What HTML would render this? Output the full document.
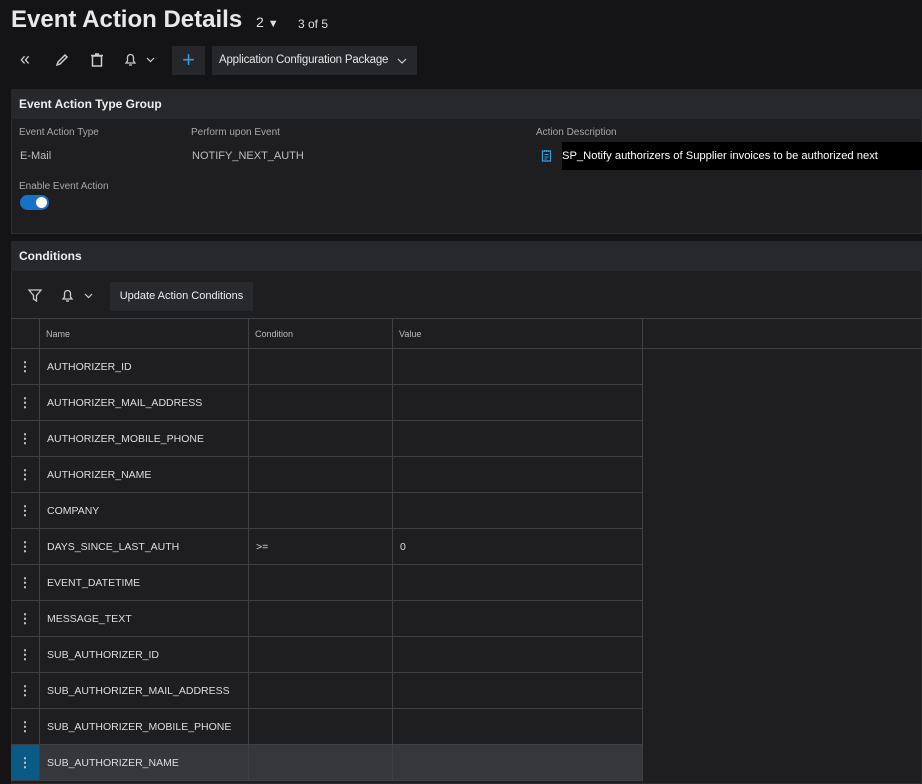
<!DOCTYPE html>
<html><head><style>
*{box-sizing:border-box;margin:0;padding:0}
body{width:922px;height:784px;background:#141416;font-family:"Liberation Sans",sans-serif;color:#e6e6e6;position:relative;overflow:hidden}
.a{position:absolute}
.title{left:11px;top:6px;font-size:24px;font-weight:bold;color:#e8e8e8}
.lbl{font-size:10px;color:#a8a8a8}
.val{font-size:11px;color:#bdbdbd}
.row{position:absolute;left:11px;width:632px;height:36px;border-bottom:1px solid #3f4043}
.row .k{position:absolute;left:0;top:0;width:29px;height:35px;border-right:1px solid #3f4043;text-align:center;line-height:35px;font-weight:bold;font-size:13px;color:#ccc}
.row .n{position:absolute;left:36px;top:12px;font-size:10.5px;color:#dedede}
.row .c1{position:absolute;left:237px;top:0;width:1px;height:35px;background:#3f4043}
.row .c2{position:absolute;left:381px;top:0;width:1px;height:35px;background:#3f4043}
.row .c3{position:absolute;left:631px;top:0;width:1px;height:35px;background:#3f4043}
</style></head><body>
<div class="a title">Event Action Details</div>
<div class="a" style="left:256px;top:14px;font-size:14px;color:#ddd">2 <span style="font-size:11px">&#9660;</span></div>
<div class="a" style="left:298px;top:17px;font-size:12px;color:#ddd">3 of 5</div>
<div class="a" style="left:20px;top:50px;font-size:18px;color:#ccc;line-height:18px">&laquo;</div>
<svg class="a" style="left:55px;top:53px" width="14" height="14"><path d="M2 12 L3 9 L10 2 L12 4 L5 11 Z" fill="none" stroke="#ccc" stroke-width="1.5"/></svg>
<svg class="a" style="left:90px;top:52px" width="14" height="15"><rect x="2.5" y="4" width="9" height="10" fill="none" stroke="#ccc" stroke-width="1.5"/><path d="M1 3.5H13M5 2H9" stroke="#ccc" stroke-width="1.5"/></svg>
<svg class="a" style="left:123px;top:52px" width="32" height="15"><path d="M3 11 L4.5 9 V5.5 A3 3 0 0 1 10.5 5.5 V9 L12 11 Z" fill="none" stroke="#ccc" stroke-width="1.3"/><path d="M6 13H9" stroke="#ccc" stroke-width="1.3"/><path d="M24 6 L27.5 9.5 L31 6" fill="none" stroke="#ccc" stroke-width="1.2"/></svg>
<div class="a" style="left:172px;top:46px;width:33px;height:29px;background:#25272a;color:#3a9ad9;font-size:22px;text-align:center;line-height:27px">+</div>
<div class="a" style="left:212px;top:46px;width:205px;height:29px;background:#25272a;font-size:11.5px;letter-spacing:-0.2px;color:#e6e6e6;line-height:29px;padding-left:7px">Application Configuration Package</div>
<svg class="a" style="left:396px;top:56px" width="12" height="10"><path d="M2 3 L6 7 L10 3" fill="none" stroke="#ccc" stroke-width="1.2"/></svg>
<div class="a" style="left:11px;top:89px;width:911px;height:145px;background:#1e1e21;border:1px solid #2c2d30"></div>
<div class="a" style="left:11px;top:89px;width:911px;height:30px;background:#27282b;font-size:12px;font-weight:bold;padding:8px 0 0 8px;color:#eee">Event Action Type Group</div>
<div class="a lbl" style="left:19px;top:127px">Event Action Type</div>
<div class="a lbl" style="left:191px;top:127px">Perform upon Event</div>
<div class="a lbl" style="left:536px;top:127px">Action Description</div>
<div class="a val" style="left:20px;top:150px">E-Mail</div>
<div class="a val" style="left:192px;top:150px">NOTIFY_NEXT_AUTH</div>
<svg class="a" style="left:541px;top:149px" width="12" height="14"><rect x="1.5" y="2" width="8" height="10" fill="none" stroke="#3a9ad9" stroke-width="1.3"/><path d="M3.5 5.5H7.5M3.5 8H7.5M3.5 10H6M3.5 1V3M5.5 1V3M7.5 1V3" stroke="#3a9ad9" stroke-width="1"/></svg>
<div class="a" style="left:562px;top:142px;width:360px;height:28px;background:#000;font-size:11.2px;color:#fff;line-height:28px">SP_Notify authorizers of Supplier invoices to be authorized next</div>
<div class="a lbl" style="left:19px;top:181px">Enable Event Action</div>
<div class="a" style="left:20px;top:195px;width:29px;height:15px;background:#1671c9;border-radius:8px"><div style="position:absolute;right:2px;top:2px;width:11px;height:11px;background:#fff;border-radius:50%"></div></div>
<div class="a" style="left:11px;top:241px;width:911px;height:543px;background:#1e1e21;border:1px solid #2c2d30"></div>
<div class="a" style="left:11px;top:241px;width:911px;height:30px;background:#27282b;font-size:12px;font-weight:bold;padding:8px 0 0 8px;color:#eee">Conditions</div>
<svg class="a" style="left:27px;top:288px" width="16" height="15"><path d="M2 2H14L9.5 7.5V13L6.5 11V7.5Z" fill="none" stroke="#ccc" stroke-width="1.3"/></svg>
<svg class="a" style="left:60px;top:288px" width="36" height="15"><path d="M3 11 L4.5 9 V5.5 A3 3 0 0 1 10.5 5.5 V9 L12 11 Z" fill="none" stroke="#ccc" stroke-width="1.3"/><path d="M6 13H9" stroke="#ccc" stroke-width="1.3"/><path d="M25 6 L28.5 9.5 L32 6" fill="none" stroke="#ccc" stroke-width="1.2"/></svg>
<div class="a" style="left:110px;top:282px;width:143px;height:29px;background:#27292c;font-size:11px;color:#eee;line-height:29px;text-align:center">Update Action Conditions</div>
<div class="a" style="left:11px;top:318px;width:911px;height:31px;border-top:1px solid #3f4043;border-bottom:1px solid #3f4043"></div>
<div class="a" style="left:39px;top:318px;width:1px;height:30px;background:#3f4043"></div>
<div class="a" style="left:248px;top:318px;width:1px;height:30px;background:#3f4043"></div>
<div class="a" style="left:392px;top:318px;width:1px;height:30px;background:#3f4043"></div>
<div class="a" style="left:642px;top:318px;width:1px;height:30px;background:#3f4043"></div>
<div class="a lbl" style="left:46px;top:329px;font-size:9px;color:#bbb">Name</div>
<div class="a lbl" style="left:255px;top:329px;font-size:9px;color:#bbb">Condition</div>
<div class="a lbl" style="left:399px;top:329px;font-size:9px;color:#bbb">Value</div>
<div class="row" style="top:349px"><div class="k">&#8942;</div><div class="n">AUTHORIZER_ID</div><i class="c1"></i><i class="c2"></i><i class="c3"></i></div>
<div class="row" style="top:385px"><div class="k">&#8942;</div><div class="n">AUTHORIZER_MAIL_ADDRESS</div><i class="c1"></i><i class="c2"></i><i class="c3"></i></div>
<div class="row" style="top:421px"><div class="k">&#8942;</div><div class="n">AUTHORIZER_MOBILE_PHONE</div><i class="c1"></i><i class="c2"></i><i class="c3"></i></div>
<div class="row" style="top:457px"><div class="k">&#8942;</div><div class="n">AUTHORIZER_NAME</div><i class="c1"></i><i class="c2"></i><i class="c3"></i></div>
<div class="row" style="top:493px"><div class="k">&#8942;</div><div class="n">COMPANY</div><i class="c1"></i><i class="c2"></i><i class="c3"></i></div>
<div class="row" style="top:529px"><div class="k">&#8942;</div><div class="n">DAYS_SINCE_LAST_AUTH</div><div class="n" style="left:245px">&gt;=</div><div class="n" style="left:389px">0</div><i class="c1"></i><i class="c2"></i><i class="c3"></i></div>
<div class="row" style="top:565px"><div class="k">&#8942;</div><div class="n">EVENT_DATETIME</div><i class="c1"></i><i class="c2"></i><i class="c3"></i></div>
<div class="row" style="top:601px"><div class="k">&#8942;</div><div class="n">MESSAGE_TEXT</div><i class="c1"></i><i class="c2"></i><i class="c3"></i></div>
<div class="row" style="top:637px"><div class="k">&#8942;</div><div class="n">SUB_AUTHORIZER_ID</div><i class="c1"></i><i class="c2"></i><i class="c3"></i></div>
<div class="row" style="top:673px"><div class="k">&#8942;</div><div class="n">SUB_AUTHORIZER_MAIL_ADDRESS</div><i class="c1"></i><i class="c2"></i><i class="c3"></i></div>
<div class="row" style="top:709px"><div class="k">&#8942;</div><div class="n">SUB_AUTHORIZER_MOBILE_PHONE</div><i class="c1"></i><i class="c2"></i><i class="c3"></i></div>
<div class="row" style="top:745px;background:#35373a"><div class="k" style="background:#0a5a86">&#8942;</div><div class="n">SUB_AUTHORIZER_NAME</div><i class="c1"></i><i class="c2"></i><i class="c3"></i></div>
</body></html>
